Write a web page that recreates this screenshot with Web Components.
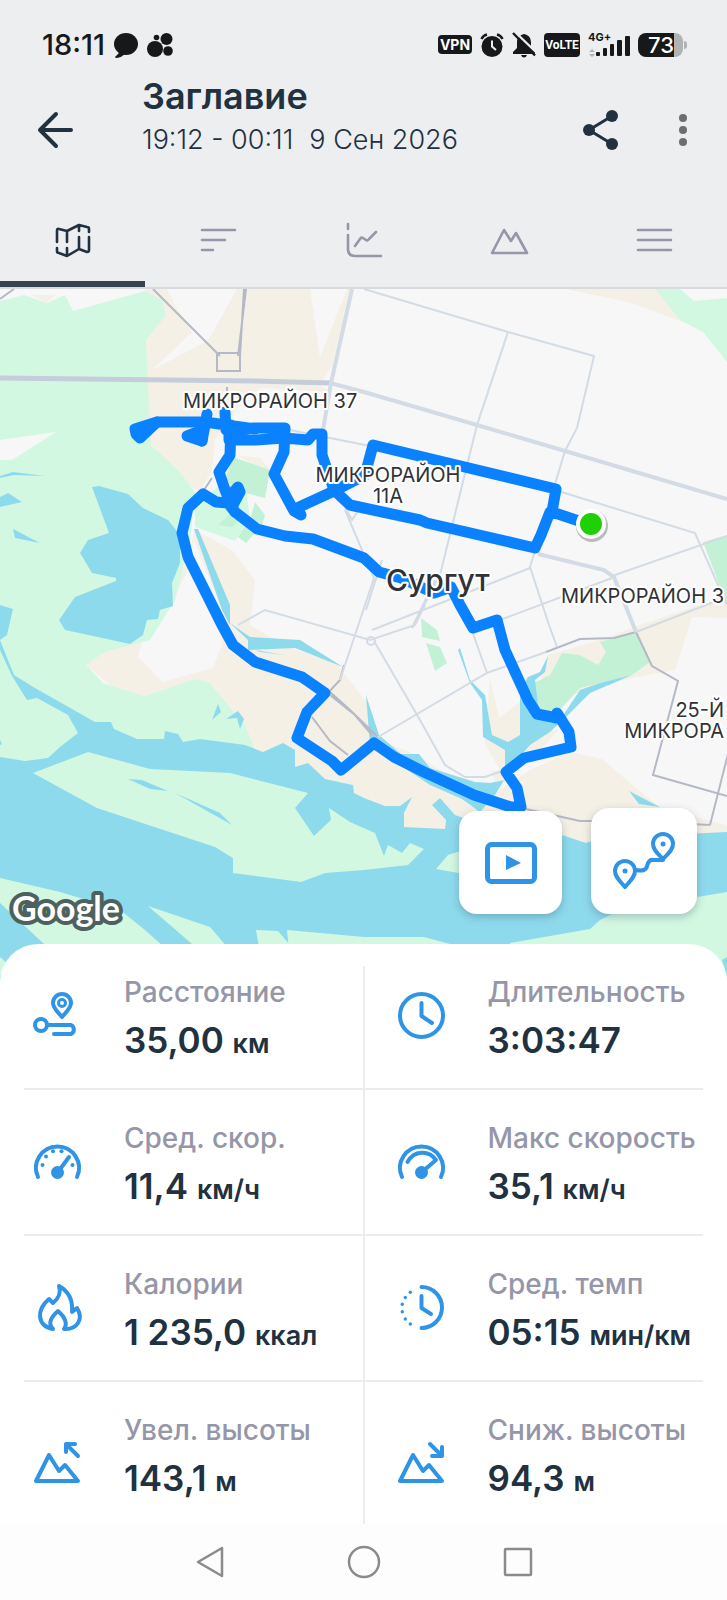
<!DOCTYPE html>
<html lang="ru">
<head>
<meta charset="utf-8">
<meta name="viewport" content="width=device-width, initial-scale=1">
<title>Заглавие</title>
<style>
  :root {
    --ink: #21313f;
    --muted: #9596a8;
    --accent: #2f93e6;
    --chrome: #eceef0;
    --line: #ececee;
  }

  * { box-sizing: border-box; }

  body {
    margin: 0;
    min-height: 100vh;
    display: flex;
    flex-direction: column;
    background: #fff;
    color: var(--ink);
    font-family: Inter, "Noto Sans", sans-serif;
  }
</style>
</head>
<body>
  <status-bar>18:11</status-bar>

  <activity-toolbar>
    <span slot="title">Заглавие</span>
    <span slot="period">19:12 - 00:11</span>
    <span slot="date">9 Сен 2026</span>
  </activity-toolbar>

  <activity-tabs selected="map"></activity-tabs>

  <route-map></route-map>

  <metric-grid>
    <metric-tile icon="distance"><span slot="label">Расстояние</span>35,00 <small slot="unit">км</small></metric-tile>
    <metric-tile icon="clock"><span slot="label">Длительность</span>3:03:47</metric-tile>
    <metric-tile icon="avgSpeed"><span slot="label">Сред. скор.</span>11,4 <small slot="unit">км/ч</small></metric-tile>
    <metric-tile icon="maxSpeed"><span slot="label">Макс скорость</span>35,1 <small slot="unit">км/ч</small></metric-tile>
    <metric-tile icon="flame"><span slot="label">Калории</span>1 235,0 <small slot="unit">ккал</small></metric-tile>
    <metric-tile icon="pace"><span slot="label">Сред. темп</span>05:15 <small slot="unit">мин/км</small></metric-tile>
    <metric-tile icon="ascent"><span slot="label">Увел. высоты</span>143,1 <small slot="unit">м</small></metric-tile>
    <metric-tile icon="descent"><span slot="label">Сниж. высоты</span>94,3 <small slot="unit">м</small></metric-tile>
  </metric-grid>

  <system-nav></system-nav>

<script>
/** Shared reset for every shadow root */
const baseStyles = `
  * { box-sizing: border-box; }
  svg { display: block; overflow: visible; }
  button {
    margin: 0;
    padding: 0;
    border: 0;
    background: none;
    color: inherit;
    font: inherit;
    cursor: pointer;
  }
`;

/**
 * Phone status bar, the clock goes in the default slot
 * @element status-bar
 */
class StatusBar extends HTMLElement {
  constructor() {
    super();
    this.attachShadow({ mode: "open" });
  }

  connectedCallback() {
    this._render();
  }

  _render() {
    const styles = `
      ${baseStyles}
      :host {
        display: flex;
        align-items: center;
        justify-content: space-between;
        height: 72px;
        padding: 17px 40px 0 42px;
        background: var(--chrome);
        color: #16181a;
      }
      .side { display: flex; align-items: center; gap: 8px; }
      .time { font-size: 29px; line-height: 32px; font-weight: 500; }
      .badge {
        display: flex;
        align-items: center;
        justify-content: center;
        border-radius: 4px;
        background: #16181a;
        color: #fff;
        font-weight: 700;
      }
      .vpn { width: 34px; height: 19px; font-size: 14px; line-height: 16px; }
      .volte { width: 36px; height: 24px; font: 700 12px/16px Roboto, sans-serif; }
      .signal { width: 42px; height: 24px; }
      .battery { display: flex; align-items: center; gap: 1px; }
      .charge {
        display: flex;
        justify-content: flex-end;
        width: 45px;
        height: 24px;
        padding-right: 9px;
        border-radius: 8px;
        background: linear-gradient(90deg, #16181a 80%, #b1b2b4 80%);
        color: #fff;
        font-size: 22px;
        line-height: 24px;
        font-weight: 500;
      }
      .tip { width: 3px; height: 8px; border-radius: 0 4px 4px 0; background: #b1b2b4; }
    `;

    this.shadowRoot.innerHTML = `
      <style>${styles}</style>
      <div class="side">
        <span class="time"><slot></slot></span>
        <svg width="26" height="26" viewBox="0 0 26 26" fill="currentColor" aria-hidden="true">
          <ellipse cx="13" cy="12" rx="12" ry="11"/>
          <path d="M3 17 L6 21 L2 25 Q2 26 4 26 Q9 25 12 22Z"/>
        </svg>
        <svg width="26" height="26" viewBox="0 0 26 26" fill="currentColor" aria-hidden="true">
          <circle cx="8" cy="17" r="8"/><circle cx="19.500" cy="7" r="6"/>
          <circle cx="9.500" cy="5.500" r="2.800"/><circle cx="21" cy="19" r="4.800"/>
        </svg>
      </div>
      <div class="side">
        <span class="badge vpn">VPN</span>
        <svg width="24" height="24" viewBox="0 0 24 24" aria-hidden="true">
          <circle cx="12" cy="13.500" r="10.500" fill="currentColor"/>
          <path d="M1.500 6 Q3 2.500 7 1.500 M22.500 6 Q21 2.500 17 1.500" fill="none" stroke="currentColor" stroke-width="2.600"/>
          <path d="M12 7.500 V13.500 L16 17" fill="none" stroke="#eceef0" stroke-width="2"/>
        </svg>
        <svg width="24" height="24" viewBox="0 0 24 24" aria-hidden="true">
          <path d="M12 1 C17 2 19 5 19 10 V14 L23 19 V21 H1 V19 L5 15 V9 C5 5 8 2 12 1Z M9 22 H15 Q14 24.500 12 24.500 Q10 24.500 9 22Z" fill="currentColor"/>
          <path d="M3 -1 L25 20" stroke="#eceef0" stroke-width="2.400"/>
          <path d="M1 0 L23 22.500" stroke="currentColor" stroke-width="2.400"/>
        </svg>
        <span class="badge volte">VoLTE</span>
        <svg class="signal" viewBox="0 0 42 24" fill="currentColor" aria-label="4G+">
          <text x="0" y="8" font-size="11" font-weight="700">4G+</text>
          <path d="M4 16 L7 19 H1Z M4 24 L7 21 H1Z" fill="#b1b2b4"/>
          <rect x="8" y="19" width="4" height="4" rx="1"/><rect x="15" y="15" width="4" height="8" rx="1"/>
          <rect x="22" y="11" width="4" height="12" rx="1"/><rect x="29" y="7" width="5" height="16" rx="1"/>
          <rect x="37" y="3" width="5" height="20" rx="1"/>
        </svg>
        <span class="battery"><span class="charge">73</span><span class="tip"></span></span>
      </div>
    `;
  }
}

/**
 * Title, time range and actions of the activity
 * @element activity-toolbar
 */
class ActivityToolbar extends HTMLElement {
  constructor() {
    super();
    this.attachShadow({ mode: "open" });
  }

  connectedCallback() {
    this._render();
  }

  _render() {
    const styles = `
      ${baseStyles}
      :host {
        display: flex;
        align-items: center;
        gap: 60px;
        height: 116px;
        padding: 0 40px 0 38px;
        background: var(--chrome);
      }
      .heading { flex: 1; align-self: flex-start; padding: 4px 0 0 8px; white-space: nowrap; }
      h1 { margin: 0 0 6px; font-size: 36px; line-height: 40px; font-weight: 600; }
      p { display: flex; gap: 16px; margin: 0; font-size: 27px; line-height: 36px; font-weight: 300; }
    `;

    this.shadowRoot.innerHTML = `
      <style>${styles}</style>
      <button type="button" aria-label="Назад">
        <svg width="36" height="36" viewBox="0 0 36 36" fill="none" stroke="currentColor" stroke-width="4" stroke-linecap="round" stroke-linejoin="round">
          <path d="M33 18 H2 M18 2 L2 18 L18 34"/>
        </svg>
      </button>
      <div class="heading">
        <h1><slot name="title"></slot></h1>
        <p><slot name="period"></slot><slot name="date"></slot></p>
      </div>
      <button type="button" aria-label="Поделиться">
        <svg width="36" height="40" viewBox="0 0 36 40" fill="currentColor">
          <path d="M29 6 L6 20 L29 34" fill="none" stroke="currentColor" stroke-width="3"/>
          <circle cx="6" cy="20" r="6"/><circle cx="29" cy="6" r="6"/><circle cx="29" cy="34" r="6"/>
        </svg>
      </button>
      <button type="button" aria-label="Ещё">
        <svg width="8" height="32" viewBox="0 0 8 32" fill="#6d6e70">
          <circle cx="4" cy="4" r="4"/><circle cx="4" cy="16" r="4"/><circle cx="4" cy="28" r="4"/>
        </svg>
      </button>
    `;
  }
}

const tabIcons = {
  map: {
    label: "Карта",
    path: "M2 20 V9 Q2 6 4 7 L12 9 L24 3 L32 5 Q34 5 34 7 V10 M12 9 V20 M24 3 V9 M24 15 V27 M34 15 V28 Q34 30 32 30 L24 27 L12 34 L4 31 Q2 31 2 29 V26 M12 26 V34"
  },
  laps: { label: "Круги", path: "M2 8 H35 M2 18 H25 M2 28 H13" },
  charts: { label: "Графики", path: "M2 2 V7 M2 13 V27 Q2 34 9 34 H35 M9 24 L14 17 Q15 15 17 16 L20 18 Q22 19 23 17 L30 10" },
  altitude: { label: "Высота", path: "M1 31 L13 8 L20 19 L25 11 L36 31Z" },
  more: { label: "Список", path: "M2 8 H35 M2 18 H35 M2 28 H35" }
};

/**
 * Icon tabs under the toolbar
 * @element activity-tabs
 *
 * @attr {string} selected - key of the open tab
 */
class ActivityTabs extends HTMLElement {
  static get observedAttributes() {
    return ["selected"];
  }

  constructor() {
    super();
    this.attachShadow({ mode: "open" });
  }

  connectedCallback() {
    this._render();
    this.shadowRoot.addEventListener("click", (event) => {
      const tab = event.target.closest("button");
      if (tab) this.setAttribute("selected", tab.dataset.key);
    });
  }

  attributeChangedCallback(name, oldValue, newValue) {
    if (oldValue !== newValue && this.isConnected) {
      this._render();
    }
  }

  _render() {
    const selected = this.getAttribute("selected");
    const styles = `
      ${baseStyles}
      :host { display: block; border-bottom: 2px solid #d8dadd; background: var(--chrome); }
      nav { display: flex; }
      button {
        flex: 1;
        display: flex;
        justify-content: center;
        padding: 34px 0 23px;
        border-bottom: 6px solid transparent;
        color: var(--muted);
      }
      button[aria-selected="true"] { border-color: #34434f; color: var(--ink); }
    `;

    this.shadowRoot.innerHTML = `
      <style>${styles}</style>
      <nav role="tablist">
        ${Object.entries(tabIcons).map(([key, tab]) => `
          <button type="button" role="tab" data-key="${key}" aria-label="${tab.label}" aria-selected="${key === selected}">
            <svg width="36" height="36" viewBox="0 0 36 36" fill="none" stroke="currentColor" stroke-width="2.600" stroke-linecap="round" stroke-linejoin="round"><path d="${tab.path}"/></svg>
          </button>`).join("")}
      </nav>
    `;
  }
}

/**
 * City map with the recorded track and the floating buttons
 * @element route-map
 */
class RouteMap extends HTMLElement {
  constructor() {
    super();
    this.attachShadow({ mode: "open" });
  }

  connectedCallback() {
    this._render();
  }

  _render() {
    const styles = `
      ${baseStyles}
      :host { display: block; position: relative; overflow: hidden; }
      .map { width: 100%; height: auto; overflow: hidden; background: #f7f7f8; }
      .beige { fill: #f5f0e5; }
      .land { fill: #f7f7f8; }
      .green { fill: #d3f8e2; }
      .park { fill: #c3f1d6; }
      .water { fill: #8edaed; }
      .road { fill: none; stroke: #d3dbe4; stroke-width: 2; }
      .wide { stroke-width: 4; }
      .highway { stroke: #c5cddb; stroke-width: 5; }
      .rail { fill: none; stroke: #b4b9c6; stroke-width: 2; }
      .track { fill: none; stroke: #0a82ff; stroke-width: 11; stroke-linecap: round; stroke-linejoin: round; }
      text { fill: #303236; stroke: #fff; stroke-width: 4; stroke-linejoin: round; paint-order: stroke; }
      .district { font-size: 20px; }
      .city { font-size: 30px; font-weight: 500; }
      .brand { font: 700 34px Lato, sans-serif; fill: #fff; stroke: #4d615f; stroke-width: 8; }
      .actions {
        position: absolute;
        right: 30px;
        bottom: 66px;
        display: flex;
        align-items: flex-end;
        gap: 29px;
      }
      .actions button {
        display: grid;
        place-items: center;
        width: 103px;
        height: 103px;
        border-radius: 18px;
        background: #fff;
        color: var(--accent);
        box-shadow: 0 3px 8px rgba(40, 70, 90, .3);
      }
      .actions .large { width: 106px; height: 106px; }
    `;

    this.shadowRoot.innerHTML = `
      <style>${styles}</style>
      <svg class="map" viewBox="0 289 727 691" role="img" aria-label="Сургут">
        <g class="beige">
          <path d="M145 289H350L332 365L320 385L330 392L262 388L245 398L215 440L212 470L200 492L185 482L148 440L140 340Z"/>
          <path d="M236 455L260 458L270 470L255 465Z"/>
          <path d="M565 289H655L685 323L632 303L575 291Z"/>
          <path d="M195 530L232 550L255 580L250 625L290 648L340 664L364 690L380 740L415 754L440 770L480 785L500 795L480 850H420L364 810L300 775L255 752L245 725L212 685L195 679L145 696L110 685L86 665L105 652L140 642L172 590L187 560Z"/>
          <path d="M490 678L499 718L522 700V735L505 782H495L485 745Z"/>
          <path d="M530 770L570 752L602 759L660 808L727 825V836L600 840L586 843L540 832L480 812L500 790Z"/>
          <path d="M520 755L540 735L560 728L545 745L525 760Z"/>
          <path d="M548 655L600 640L640 625L700 605L727 600V618L692 617L675 670L632 678L555 700L540 675Z"/>
        </g>
        <g class="land">
          <path d="M167 289H237L209 339L200 345L152 370L192 332L175 305Z"/>
          <path d="M310 289H347L320 357Z"/>
          <path d="M194 540L222 610V645L213 668L162 682L138 657L147 620L173 606L178 590L190 565Z"/>
          <path d="M232 545L238 545L262 575L250 625L330 655L400 745L470 775L500 770L480 735L470 690L440 600L300 540Z"/>
        </g>
        <g class="green">
          <path d="M0 301L24 295L47 303L65 295L73 311L145 291L162 300L166 315L146 340L148 383L151 445L178 470L195 492L190 540L175 600L150 640L105 652L86 665L103 683L145 696L195 679L210 683L245 725L255 750L0 770Z"/>
          <path d="M195 508L225 480L245 480L250 520L235 541L195 527Z"/>
          <path d="M655 289H680L694 301L727 298V362L703 332L680 320Z"/>
        </g>
        <path class="beige" d="M31 295H55L47 303Z"/>
        <path class="land" d="M0 440L56 432L12 460H0Z"/>
        <g class="park">
          <path d="M233 457L270 470L265 498L245 493L225 480Z"/>
          <path d="M255 502L265 515L262 525L246 543L238 537L250 520Z M218 525L230 514L245 515L232 527Z"/>
          <path d="M562 653L580 655L598 665L606 652L600 642L636 632L650 662L632 675L580 688L558 712H536L530 685L550 675Z"/>
          <path d="M703 542L727 535V605Z"/>
          <path d="M421 618L437 630L440 641L422 637Z M426 643L440 647L447 663L435 671Z"/>
        </g>
        <g class="water">
          <path d="M92 487L99 486L128 494L143 508L168 520L180 535V563L172 583L173 606L160 610L158 619L147 620L143 635L130 644L65 630L59 620L75 597L116 581V578L92 573L80 553L88 540L109 533Z"/>
          <path d="M0 497L8 493L22 502L0 507Z M13 529L40 543L15 538Z M0 476L13 472L45 476L14 475L0 478Z M0 605L13 609L7 635L0 640Z"/>
          <path d="M194 529L198 529L230 605V625L222 610Z M230 623L250 637L300 640L343 667L295 648L248 650V640Z M255 650L284 655L260 652Z"/>
          <path d="M212 720L218 704L221 712Z M226 719L238 711L244 719L240 729L237 718Z"/>
          <path d="M0 640L14 675L35 688L95 722H111L114 729L137 739H164L165 731L178 734L183 742L200 739L245 745L263 752L283 743L295 750V767L308 763L325 779L353 785L354 793L364 798L385 806H400L412 797L404 813V827L445 829L446 820L432 805L440 798L455 815L475 822L540 830L562 835L586 843L600 838L727 832V980H0Z"/>
          <path d="M366 695L379 735L401 754L419 754L430 768L475 782L490 783L505 780V750L483 737L482 700L470 683L458 650L460 648L470 680L485 695L492 735L508 742L520 735V690L528 677L540 672L548 656L545 672L535 680L540 720L560 720L580 690L600 683L632 675L590 693L568 715L550 732L530 745L515 762L495 795L480 812L462 799L430 785L370 745Z"/>
          <path d="M629 791L660 807L639 804Z"/>
        </g>
        <g class="green">
          <path d="M0 650L12 676L27 700L37 698L68 715L78 733L60 747L48 758L25 761L0 757Z"/>
          <path d="M33 773L88 752L150 769L230 773L308 793L295 808L314 836L331 820L329 808L350 822L375 833L384 856L388 845L402 853L410 843L424 849L408 865L364 870L325 873L301 882L233 873V858L215 847L97 808Z"/>
          <path d="M436 869L448 855L470 848V875Z"/>
          <path d="M0 878L60 892L120 910L145 930L165 948V980H80L43 943L0 903Z M0 957L20 975H0Z"/>
          <path d="M148 906L210 927L228 948V980L192 944Z M256 930L278 931L290 945V980H265Z M287 930L364 937H424L450 944V980H292Z"/>
          <path d="M510 943L590 929L600 920L620 910L727 892V980H510Z"/>
        </g>
        <g class="water">
          <path d="M128 779L142 780L168 791L150 789Z M175 793L220 813L232 825Z M722 960L727 957V975Z M0 740L2 744L0 745Z"/>
        </g>

        <g class="rail">
          <path d="M153 289L220 356 M246 289L238 356 M244 289L240 356 M217 353H240V371H217Z M0 299L14 289"/>
          <path d="M330 692L350 710L378 737 M330 695L355 715L372 735 M312 717L330 741L348 755 M344 665L340 680L328 693"/>
          <path d="M546 652L580 639L614 638L636 632L652 666L678 681L653 775L727 796 M710 825L729 750 M526 809L580 821H600 M690 824L710 825"/>
          <path d="M212 478L204 490 M227 387V392"/>
        </g>
        <g class="road">
          <path class="highway" d="M0 378L254 381L330 383"/>
          <path class="wide" d="M330 383L364 392L477 425L565 451L727 499 M352 289L331 383L323 430"/>
          <path d="M364 289L508 332L594 356L577 428L565 451L530 567L549 625L557 647 M508 332L477 425L440 575L412 628"/>
          <path d="M558 491L695 533L727 605 M612 576L727 536 M612 578L500 620 M530 568L372 630 M280 428L380 448"/>
          <path class="wide" d="M538 554L604 570L614 577L636 632"/>
          <path d="M636 632L727 597 M374 641L420 720L445 765L465 777H485L505 770 M378 737L487 673L546 652 M487 673L470 625"/>
          <path d="M238 625L265 610L370 640L415 625L425 605 M345 510L374 578L340 680 M382 560L366 610 M435 580L412 628 M346 509L358 511L352 520Z"/>
          <circle cx="371" cy="641" r="4"/>
        </g>

        <g class="track">
          <path d="M591 525L552 512L556 489L373 445L365 475L334 491L297 508L301 515L294 511L274 474L284 452L285 428H254L229 431V440H256L284 438L308 440L313 434L322 434V455L334 490L350 505L420 520L427 523L535 548L541 535L550 512"/>
          <path fill="#0a82ff" d="M135 429L157 422L140 438L136 434Z M187 436L203 430L202 441Z"/>
          <path d="M157 422H205L255 429 M202 441L207 414 M225 412L226 430L231 425L230 455L219 472L225 490L232 507L240 492L238 487L229 497"/>
          <path d="M235 512L257 529L285 536L313 539L364 558L379 572L401 578L434 593L451 587L460 605L473 628L497 620L505 650L528 700L537 714L557 718L557 713L569 732L571 747L524 758L506 772L517 788L521 807H511L474 795L424 772L394 757L374 743L341 770L332 761L297 738L307 712L325 693L302 677L255 662L233 645L222 625L188 557L182 533L188 508L203 494L216 502L228 503L235 512"/>
        </g>
        <circle cx="592" cy="526" r="16" fill="#7d8288" opacity=".5"/>
        <circle cx="591" cy="524" r="15" fill="#fff"/>
        <circle cx="591" cy="524" r="11" fill="#1fd005"/>

        <g class="district">
          <text x="183" y="408">МИКРОРАЙОН 37</text>
          <text x="388" y="482" text-anchor="middle">МИКРОРАЙОН</text>
          <text x="388" y="503" text-anchor="middle">11А</text>
          <text x="724" y="603" text-anchor="end">МИКРОРАЙОН 3</text>
          <text x="724" y="717" text-anchor="end">25-Й</text>
          <text x="724" y="738" text-anchor="end">МИКРОРА</text>
        </g>
        <text class="city" x="386" y="591">Сургут</text>
        <text class="brand" x="12" y="921">Google</text>
      </svg>
      <div class="actions">
        <button type="button" aria-label="Воспроизвести">
          <svg width="52" height="42" viewBox="0 0 52 42" fill="none" stroke="currentColor" stroke-width="5">
            <rect x="2.500" y="2.500" width="47" height="37" rx="4"/>
            <path d="M21 13 L36 21 L21 28Z" fill="currentColor" stroke="none"/>
          </svg>
        </button>
        <button type="button" class="large" aria-label="Маршрут">
          <svg width="62" height="58" viewBox="0 0 62 58" fill="none" stroke="currentColor" stroke-width="4" stroke-linecap="round" stroke-linejoin="round">
            <path d="M12 55 C7 49 2 45 2 39 A10 10 0 0 1 22 39 C22 45 17 49 12 55Z"/>
            <path d="M50 27 C45 22 40 18 40 12 A10 10 0 0 1 60 12 C60 18 55 22 50 27Z"/>
            <path d="M23 38 Q33 40 34 34 Q36 27 40 28 H50"/>
            <circle cx="12" cy="39" r="2.500" fill="currentColor" stroke="none"/><circle cx="50" cy="12" r="2.500" fill="currentColor" stroke="none"/>
          </svg>
        </button>
      </div>
    `;
  }
}

/**
 * White sheet with two columns of metrics
 * @element metric-grid
 */
class MetricGrid extends HTMLElement {
  constructor() {
    super();
    this.attachShadow({ mode: "open" });
  }

  connectedCallback() {
    this._render();
  }

  _render() {
    this.shadowRoot.innerHTML = `
      <style>
        :host {
          display: grid;
          grid-template-columns: 1fr 1fr;
          position: relative;
          margin-top: -36px;
          padding: 0 24px;
          border-radius: 38px 38px 0 0;
          background: #fff linear-gradient(var(--line), var(--line)) center bottom / 2px calc(100% - 22px) no-repeat;
        }
        ::slotted(:nth-child(odd)) { padding-left: 10px; }
        ::slotted(:nth-child(even)) { padding-left: 34px; }
        ::slotted(:nth-last-child(-n + 2)) { border-bottom: 0; padding-bottom: 24px; }
      </style>
      <slot></slot>
    `;
  }
}

const mountain = `<path d="M2 51 L15 25 L25 41 L31 35 L44 51Z"/>`;

const metricIcons = {
  distance: `
    <circle cx="7" cy="33" r="6"/>
    <path d="M14 33 H37 A5 5 0 0 1 37 42 H20"/>
    <path d="M28 25 C23 19 19 16 19 11 A9 9 0 0 1 37 11 C37 16 33 19 28 25Z"/>
    <circle cx="28" cy="11" r="3.500" stroke-width="3"/>`,
  clock: `<circle cx="23.500" cy="23.500" r="21.500"/><path d="M23.500 11 V24 L34 31"/>`,
  avgSpeed: `
    <path d="M4 39 A21.500 21.500 0 1 1 43 39"/>
    <path d="M35 19 L24 34" />
    <circle cx="23.500" cy="34.500" r="6.500" fill="currentColor" stroke="none"/>
    <g fill="currentColor" stroke="none"><circle cx="8.500" cy="27" r="2"/><circle cx="12" cy="18.500" r="2"/><circle cx="19" cy="13.200" r="2"/><circle cx="27.500" cy="13.200" r="2"/><circle cx="38.500" cy="27" r="2"/></g>`,
  maxSpeed: `
    <path d="M4 39 A21.500 21.500 0 1 1 43 39"/>
    <path d="M9.500 24 C16 12 31 12 38 22 L24 34"/>
    <circle cx="23.500" cy="34.500" r="6.500" fill="currentColor" stroke="none"/>`,
  flame: `<path d="M25 2 C34 7 39 16 38 28 L43 24 C50 35 43 46 30 45 C34 40 31 33 24 27 C16 34 14 40 19 45 C3 42 2 26 15 15 L19 19 C25 14 27 8 25 2Z"/>`,
  pace: `
    <path d="M23.500 3 A20.500 20.500 0 0 1 23.500 44"/><path d="M23.500 12 V24 L33 30"/>
    <g fill="currentColor" stroke="none"><circle cx="12.300" cy="8.300" r="1.700"/><circle cx="7.300" cy="13.500" r="1.700"/><circle cx="4.300" cy="20.300" r="1.700"/><circle cx="4.300" cy="27.700" r="1.700"/><circle cx="7.300" cy="35" r="1.700"/><circle cx="12.300" cy="40" r="1.700"/></g>`,
  ascent: `${mountain}<path d="M44 26 L32 14 M41 14 H32 V22"/>`,
  descent: `${mountain}<path d="M32 14 L44 26 M34 26 H44 V17"/>`
};

/**
 * One metric: icon, label, value and unit
 * @element metric-tile
 *
 * @attr {string} icon - key in metricIcons
 */
class MetricTile extends HTMLElement {
  constructor() {
    super();
    this.attachShadow({ mode: "open" });
  }

  connectedCallback() {
    this._render();
  }

  _render() {
    const styles = `
      ${baseStyles}
      :host {
        box-sizing: border-box;
        display: flex;
        gap: 42px;
        min-width: 0;
        padding: 30px 0 26px;
        border-bottom: 2px solid var(--line);
      }
      svg { flex: none; margin-top: 18px; color: var(--accent); }
      .label { margin-bottom: 8px; color: var(--muted); font-size: 28px; line-height: 36px; font-weight: 500; }
      .value { font-size: 35px; line-height: 44px; font-weight: 600; }
      .label, .value { white-space: nowrap; }
      ::slotted(small) { font-size: 27px; line-height: 28px; }
    `;

    this.shadowRoot.innerHTML = `
      <style>${styles}</style>
      <svg width="48" height="48" viewBox="0 0 48 48" fill="none" stroke="currentColor" stroke-width="4" stroke-linecap="round" stroke-linejoin="round" aria-hidden="true">${metricIcons[this.getAttribute("icon")]}</svg>
      <div>
        <div class="label"><slot name="label"></slot></div>
        <div class="value"><slot></slot><slot name="unit"></slot></div>
      </div>
    `;
  }
}

/**
 * Android navigation buttons
 * @element system-nav
 */
class SystemNav extends HTMLElement {
  constructor() {
    super();
    this.attachShadow({ mode: "open" });
  }

  connectedCallback() {
    this._render();
  }

  _render() {
    const button = (label, shape) => `
      <button type="button" aria-label="${label}">
        <svg width="32" height="32" viewBox="0 0 32 32" fill="none" stroke="#8b8b8d" stroke-width="2.500" stroke-linejoin="round">${shape}</svg>
      </button>`;

    this.shadowRoot.innerHTML = `
      <style>
        ${baseStyles}
        :host {
          display: flex;
          align-items: center;
          justify-content: center;
          gap: 122px;
          padding: 22px 0;
          background: #fdfdfd;
        }
      </style>
      ${button("Назад", `<path d="M4 16 L28 2 V30Z"/>`)}
      ${button("Домой", `<circle cx="16" cy="16" r="15"/>`)}
      ${button("Недавние", `<rect x="3" y="3" width="26" height="26" rx="1"/>`)}
    `;
  }
}

customElements.define("status-bar", StatusBar);
customElements.define("activity-toolbar", ActivityToolbar);
customElements.define("activity-tabs", ActivityTabs);
customElements.define("route-map", RouteMap);
customElements.define("metric-grid", MetricGrid);
customElements.define("metric-tile", MetricTile);
customElements.define("system-nav", SystemNav);
</script>
</body>
</html>
